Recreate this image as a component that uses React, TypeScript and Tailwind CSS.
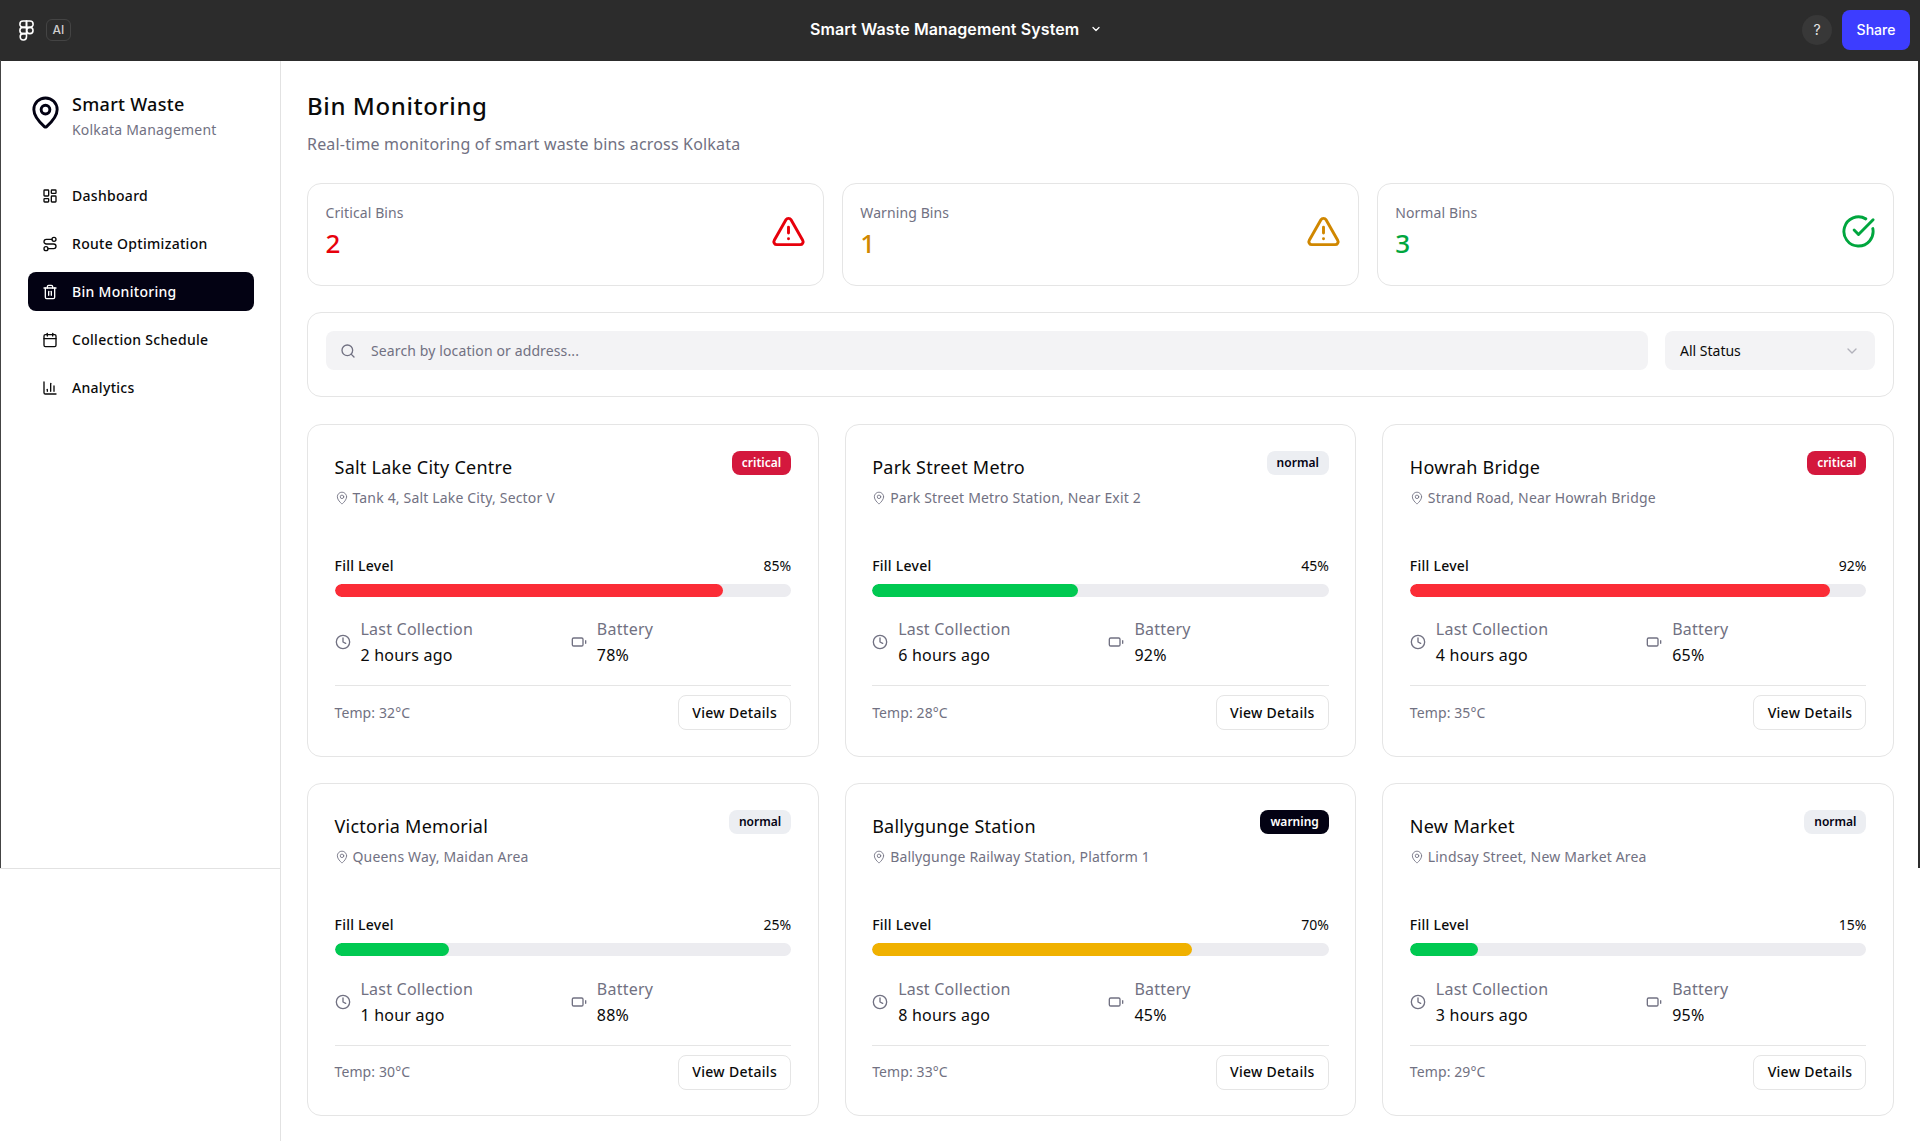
import {
  BarChart3,
  Battery,
  Calendar,
  ChevronDown,
  CircleCheckBig,
  Clock,
  LayoutDashboard,
  MapPin,
  Route,
  Search,
  Trash2,
  TriangleAlert,
} from "lucide-react";

const links = [
  { label: "Dashboard", icon: LayoutDashboard },
  { label: "Route Optimization", icon: Route },
  { label: "Bin Monitoring", icon: Trash2, active: true },
  { label: "Collection Schedule", icon: Calendar },
  { label: "Analytics", icon: BarChart3 },
];

type Status = "critical" | "normal" | "warning";

const bins: {
  name: string;
  address: string;
  status: Status;
  fill: number;
  last: string;
  battery: number;
  temp: number;
}[] = [
  { name: "Salt Lake City Centre", address: "Tank 4, Salt Lake City, Sector V", status: "critical", fill: 85, last: "2 hours ago", battery: 78, temp: 32 },
  { name: "Park Street Metro", address: "Park Street Metro Station, Near Exit 2", status: "normal", fill: 45, last: "6 hours ago", battery: 92, temp: 28 },
  { name: "Howrah Bridge", address: "Strand Road, Near Howrah Bridge", status: "critical", fill: 92, last: "4 hours ago", battery: 65, temp: 35 },
  { name: "Victoria Memorial", address: "Queens Way, Maidan Area", status: "normal", fill: 25, last: "1 hour ago", battery: 88, temp: 30 },
  { name: "Ballygunge Station", address: "Ballygunge Railway Station, Platform 1", status: "warning", fill: 70, last: "8 hours ago", battery: 45, temp: 33 },
  { name: "New Market", address: "Lindsay Street, New Market Area", status: "normal", fill: 15, last: "3 hours ago", battery: 95, temp: 29 },
];

const badgeClass: Record<Status, string> = {
  critical: "bg-[#d4183d] text-white",
  normal: "bg-[#eceef2] text-[#030213]",
  warning: "bg-[#030213] text-white",
};

const barClass: Record<Status, string> = {
  critical: "bg-red-500",
  normal: "bg-green-500",
  warning: "bg-yellow-500",
};

function FigmaLogo() {
  return (
    <svg width="15" height="21" viewBox="0 0 14 20" fill="none" stroke="white" strokeWidth="1.5">
      <path d="M7 1H3.7a3 3 0 0 0 0 6H7V1Z" />
      <path d="M7 1h3.3a3 3 0 0 1 0 6H7V1Z" />
      <path d="M7 7H3.7a3 3 0 0 0 0 6H7V7Z" />
      <circle cx="10.2" cy="10" r="3" />
      <path d="M7 13H3.7a3 3 0 1 0 3.3 3V13Z" />
    </svg>
  );
}

function TopBar() {
  return (
    <header className="flex h-[61px] shrink-0 items-center justify-between border-b border-[#2c2c2c] bg-[#2c2c2c] pl-[19px] pr-[10px] font-['Inter',sans-serif]">
      <div className="flex items-center gap-[12px]">
        <FigmaLogo />
        <span className="flex h-[22px] w-[25px] items-center justify-center rounded-[6px] border border-[#444444] text-xs font-medium text-[#cfcfcf]">
          AI
        </span>
      </div>
      <div className="absolute left-[810px] top-[17px] flex items-center gap-[11px] text-base font-semibold tracking-[0.1px] text-white">
        Smart Waste Management System
        <ChevronDown size={12} strokeWidth={2.5} />
      </div>
      <div className="flex items-center gap-[10px]">
        <span className="flex h-[30px] w-[30px] items-center justify-center rounded-full bg-[#383838] text-sm text-[#e5e5e5]">
          ?
        </span>
        <button className="h-[40px] w-[68px] rounded-[8px] bg-[#3d3dff] text-sm font-medium text-white">
          Share
        </button>
      </div>
    </header>
  );
}

function Sidebar() {
  return (
    <aside className="flex w-[281px] shrink-0 flex-col border-r border-[#e2e2e2] bg-white">
      <div className="flex h-[115px] items-start pl-[28px] pt-[34px]">
        <MapPin size={35} strokeWidth={2} className="text-[#030213]" />
        <div className="ml-[9px] -mt-[5px]">
          <div className="text-[18px] font-medium leading-[28px] tracking-[0.3px] text-[#0a0a0a]">Smart Waste</div>
          <div className="text-sm leading-[24px] tracking-[0.2px] text-[#717182]">Kolkata Management</div>
        </div>
      </div>
      <nav className="flex flex-col gap-[9px] px-[28px]">
        {links.map((link) => {
          const Icon = link.icon;
          return (
            <a
              key={link.label}
              className={`flex h-[39px] w-[226px] items-center gap-[14px] rounded-[8px] px-[14px] pt-px text-sm font-medium tracking-[0.3px] ${
                link.active ? "bg-[#030213] text-white" : "text-[#0a0a0a]"
              }`}
            >
              <Icon size={16} strokeWidth={2} />
              {link.label}
            </a>
          );
        })}
      </nav>
    </aside>
  );
}

function StatCard({ label, value, color, icon }: { label: string; value: number; color: string; icon: React.ReactNode }) {
  return (
    <div className="flex h-[103px] items-center justify-between rounded-[14px] border border-[#e5e5e5] pb-[7px] pl-[17.5px] pr-[17px]">
      <div>
        <div className="text-sm leading-[20px] tracking-[0.1px] text-[#717182]">{label}</div>
        <div className={`mt-[4px] text-[26px] font-medium leading-[32px] ${color}`}>{value}</div>
      </div>
      {icon}
    </div>
  );
}

function Detail({ icon, label, value }: { icon: React.ReactNode; label: string; value: string }) {
  return (
    <div className="flex items-center gap-[10px]">
      {icon}
      <div className="text-base leading-[26px] tracking-[0.22px]">
        <div className="text-[#717182]">{label}</div>
        <div className="text-[#0a0a0a]">{value}</div>
      </div>
    </div>
  );
}

function BinCard({ bin }: { bin: (typeof bins)[number] }) {
  return (
    <div className="h-[333px] rounded-[14px] border border-[#e5e5e5] pl-[26.5px] pr-[26.5px] pt-[26px]">
      <div className="flex h-[105px] items-start justify-between">
        <div>
          <div className="mt-[2px] text-[18px] leading-[28px] tracking-[0.25px] text-[#0a0a0a]">{bin.name}</div>
          <div className="mt-[7px] flex items-center gap-[4px] text-sm leading-[20px] tracking-[0.17px] text-[#717182]">
            <MapPin size={14} strokeWidth={1.5} />
            {bin.address}
          </div>
        </div>
        <span className={`flex h-[24px] items-center rounded-[8px] px-[10px] text-xs font-semibold ${badgeClass[bin.status]}`}>
          {bin.status}
        </span>
      </div>
      <div className="flex justify-between text-sm leading-[20px] text-[#0a0a0a]">
        <span className="font-medium tracking-[0.25px]">Fill Level</span>
        <span>{bin.fill}%</span>
      </div>
      <div className="mt-[8px] h-[13px] overflow-hidden rounded-full bg-[#ececf0]">
        <div className={`h-full rounded-full ${barClass[bin.status]}`} style={{ width: `${bin.fill}%` }} />
      </div>
      <div className="mt-[19.3px] grid grid-cols-2 gap-4">
        <Detail icon={<Clock size={16} strokeWidth={2} className="text-[#717182]" />} label="Last Collection" value={bin.last} />
        <Detail icon={<Battery size={16} strokeWidth={2} className="text-[#717182]" />} label="Battery" value={`${bin.battery}%`} />
      </div>
      <div className="mt-[17px] flex items-center justify-between border-t border-[#e5e5e5] pt-[9px]">
        <span className="text-sm tracking-[0.1px] text-[#717182]">Temp: {bin.temp}°C</span>
        <button className="h-[35px] w-[113px] rounded-[8px] border border-[#e5e5e5] text-sm font-medium tracking-[0.3px] text-[#0a0a0a]">
          View Details
        </button>
      </div>
    </div>
  );
}

export default function App() {
  return (
    <div className="relative flex h-[1141px] flex-col overflow-hidden bg-white font-['Noto_Sans',sans-serif]">
      <TopBar />
      <div className="flex flex-1">
        <Sidebar />
        <main className="flex-1 pl-[26px] pr-[26px] pt-[29px]">
          <h1 className="text-2xl font-medium leading-[32px] tracking-[0.6px] text-[#0a0a0a]">Bin Monitoring</h1>
          <p className="mt-[10px] text-base leading-[24px] tracking-[0.18px] text-[#717182]">
            Real-time monitoring of smart waste bins across Kolkata
          </p>

          <div className="mt-[27px] grid grid-cols-3 gap-[17.5px]">
            <StatCard label="Critical Bins" value={2} color="text-red-600" icon={<TriangleAlert size={35} strokeWidth={2} className="text-red-600" />} />
            <StatCard label="Warning Bins" value={1} color="text-yellow-600" icon={<TriangleAlert size={35} strokeWidth={2} className="text-yellow-600" />} />
            <StatCard label="Normal Bins" value={3} color="text-green-600" icon={<CircleCheckBig size={35} strokeWidth={2} className="text-green-600" />} />
          </div>

          <div className="mt-[26px] flex h-[85px] items-start gap-[17px] rounded-[14px] border border-[#e5e5e5] px-[18px] pt-[18px]">
            <div className="flex h-[39px] flex-1 items-center gap-[15px] rounded-[8px] bg-[#f3f3f5] pl-[14px] pt-px text-sm tracking-[0.12px] text-[#717182]">
              <Search size={16} strokeWidth={2} />
              Search by location or address...
            </div>
            <div className="flex h-[39px] w-[210px] items-center justify-between rounded-[8px] bg-[#f3f3f5] pl-[15px] pr-[15px] pt-px text-sm text-[#0a0a0a]">
              All Status
              <ChevronDown size={16} strokeWidth={2} className="text-[#717182] opacity-50" />
            </div>
          </div>

          <div className="mt-[27px] grid grid-cols-3 gap-x-[26px] gap-y-[26.4px]">
            {bins.map((bin) => (
              <BinCard key={bin.name} bin={bin} />
            ))}
          </div>
        </main>
      </div>

      {/* frame lines around the preview area */}
      <div className="absolute left-0 top-[60px] h-[808px] w-px bg-[#444444]" />
      <div className="absolute right-0 top-[60px] h-[808px] w-[2px] bg-[#2c2c2c]" />
      <div className="absolute left-0 top-[868px] h-px w-[280px] bg-[#e2e2e2]" />
    </div>
  );
}
